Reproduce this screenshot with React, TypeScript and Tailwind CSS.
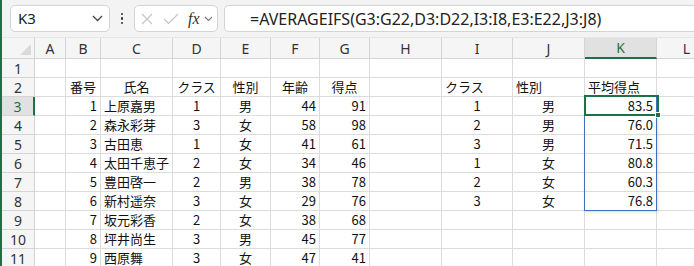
import React from "react";

const COLS = [
  { k: "A", w: 31 },
  { k: "B", w: 35 },
  { k: "C", w: 72 },
  { k: "D", w: 48 },
  { k: "E", w: 50 },
  { k: "F", w: 49 },
  { k: "G", w: 50 },
  { k: "H", w: 72 },
  { k: "I", w: 71 },
  { k: "J", w: 72 },
  { k: "K", w: 72 },
  { k: "L", w: 60 },
];

type Cell = { t: string; a: "l" | "c" | "r" };
const L = (t: string): Cell => ({ t, a: "l" });
const C = (t: string): Cell => ({ t, a: "c" });
const R = (t: string): Cell => ({ t, a: "r" });

const people: [string, string, string, string, string, string][] = [
  ["1", "上原嘉男", "1", "男", "44", "91"],
  ["2", "森永彩芽", "3", "女", "58", "98"],
  ["3", "古田恵", "1", "女", "41", "61"],
  ["4", "太田千恵子", "2", "女", "34", "46"],
  ["5", "豊田啓一", "2", "男", "38", "78"],
  ["6", "新村遥奈", "3", "女", "29", "76"],
  ["7", "坂元彩香", "2", "女", "38", "68"],
  ["8", "坪井尚生", "3", "男", "45", "77"],
  ["9", "西原舞", "3", "女", "47", "41"],
];

const summary: [string, string, string][] = [
  ["1", "男", "83.5"],
  ["2", "男", "76.0"],
  ["3", "男", "71.5"],
  ["1", "女", "80.8"],
  ["2", "女", "60.3"],
  ["3", "女", "76.8"],
];

function buildRows(): Record<string, Cell>[] {
  const rows: Record<string, Cell>[] = [];
  rows.push({});
  rows.push({
    B: C("番号"),
    C: C("氏名"),
    D: C("クラス"),
    E: C("性別"),
    F: C("年齢"),
    G: C("得点"),
    I: L("クラス"),
    J: L("性別"),
    K: L("平均得点"),
  });
  people.forEach((p, i) => {
    const r: Record<string, Cell> = {
      B: R(p[0]),
      C: L(p[1]),
      D: C(p[2]),
      E: C(p[3]),
      F: R(p[4]),
      G: R(p[5]),
    };
    if (summary[i]) {
      r.I = C(summary[i][0]);
      r.J = C(summary[i][1]);
      r.K = R(summary[i][2]);
    }
    rows.push(r);
  });
  return rows;
}

const cellFont = { fontFamily: '"Noto Sans CJK JP", "Noto Sans", sans-serif' };
const uiFont = { fontFamily: '"Noto Sans", "Open Sans", sans-serif' };

export default function App() {
  const rows = buildRows();
  return (
    <div className="relative w-[694px] h-[266px] overflow-hidden bg-white flex">
      <div className="w-[2px] shrink-0 bg-[#1e7145]" />
      <div className="flex-1 flex flex-col min-w-0">
        {/* toolbar */}
        <div className="h-[38px] shrink-0 bg-[#f3f3f3] flex items-center border-b border-[#e6e6e6]" style={uiFont}>
          <div className="ml-[8px] shrink-0 w-[100px] h-[27px] bg-white border border-[#d4d4d4] rounded-[5px] flex items-center justify-between pl-[7px] pr-[6px]">
            <span className="text-[15px] text-[#222] leading-none">K3</span>
            <svg width="11" height="7" viewBox="0 0 11 7">
              <path d="M1 1 L5.5 5.5 L10 1" fill="none" stroke="#444" strokeWidth="1.3" />
            </svg>
          </div>
          <div className="w-[24px] shrink-0 flex flex-col items-center gap-[2px]">
            <span className="w-[2.5px] h-[2.5px] bg-[#333] rounded-full" />
            <span className="w-[2.5px] h-[2.5px] bg-[#333] rounded-full" />
            <span className="w-[2.5px] h-[2.5px] bg-[#333] rounded-full" />
          </div>
          <div className="w-[84px] shrink-0 h-[27px] bg-white border border-[#d4d4d4] rounded-[5px] flex items-center pl-[6px]">
            <svg width="12" height="12" viewBox="0 0 12 12">
              <path d="M1 1 L11 11 M11 1 L1 11" stroke="#c4c4c4" strokeWidth="1.2" />
            </svg>
            <svg width="16" height="12" viewBox="0 0 16 12" className="ml-[10px]">
              <path d="M1 6 L5.5 10.5 L15 1" fill="none" stroke="#c4c4c4" strokeWidth="1.2" />
            </svg>
            <span
              className="ml-[9px] text-[16px] italic leading-none text-[#333]"
              style={{ fontFamily: '"Liberation Serif", "DejaVu Serif", serif' }}
            >
              fx
            </span>
            <svg width="9" height="6" viewBox="0 0 9 6" className="ml-[4px]">
              <path d="M1 1 L4.5 4.5 L8 1" fill="none" stroke="#777" strokeWidth="1.1" />
            </svg>
          </div>
          <div className="ml-[6px] flex-1 min-w-0 h-[27px] bg-white border border-[#d4d4d4] rounded-l-[5px] border-r-0 flex items-center pl-[25px] overflow-hidden">
            <span className="text-[16px] text-[#222] leading-none whitespace-nowrap">
              =AVERAGEIFS(G3:G22,D3:D22,I3:I8,E3:E22,J3:J8)
            </span>
          </div>
        </div>

        {/* grid */}
        <div className="flex-1 relative">
          {/* column headers */}
          <div className="flex h-[21px] bg-[#f5f5f5]" style={uiFont}>
            <div className="w-[33px] shrink-0 border-r border-b border-[#d4d4d4] flex items-end justify-end p-[3px]">
              <svg width="11" height="11" viewBox="0 0 11 11">
                <path d="M11 0 L11 11 L0 11 Z" fill="#dadada" />
              </svg>
            </div>
            {COLS.map((c) => (
              <div
                key={c.k}
                style={{ width: c.w }}
                className={
                  "shrink-0 border-r flex items-center justify-center text-[14px] " +
                  (c.k === "K"
                    ? "bg-[#e1e1e1] text-[#1e7145] border-[#d4d4d4] border-b-2 border-b-[#1e7145]"
                    : "text-[#333] border-[#d4d4d4] border-b")
                }
              >
                {c.k}
              </div>
            ))}
          </div>
          {rows.map((r, i) => (
            <div key={i} className="flex h-[19px]">
              <div
                className={
                  "w-[33px] shrink-0 border-b border-[#d4d4d4] flex items-center justify-center text-[14px] " +
                  (i === 2
                    ? "bg-[#e1e1e1] text-[#1e7145] border-r-2 border-r-[#1e7145]"
                    : "bg-[#f5f5f5] text-[#333] border-r")
                }
                style={uiFont}
              >
                {i + 1}
              </div>
              {COLS.map((c) => {
                const cell = r[c.k];
                return (
                  <div
                    key={c.k}
                    style={{ width: c.w, ...cellFont }}
                    className={
                      "shrink-0 border-r border-b border-[#dcdcdc] flex items-center px-[3px] text-[13px] text-[#111] whitespace-nowrap overflow-visible " +
                      (cell?.a === "r" ? "justify-end" : cell?.a === "c" ? "justify-center" : "justify-start")
                    }
                  >
                    {cell?.t ?? ""}
                  </div>
                );
              })}
            </div>
          ))}
          {/* range highlight K3:K8 */}
          <div
            className="absolute border border-[#3f6fc4] shadow-[1px_1px_3px_rgba(0,0,0,0.15)] pointer-events-none"
            style={{ left: 582, top: 58, width: 73, height: 115 }}
          />
          {/* active cell K3 */}
          <div
            className="absolute border-2 border-[#1e7145] pointer-events-none"
            style={{ left: 582, top: 57, width: 75, height: 21 }}
          />
          <div
            className="absolute bg-[#1e7145] border border-white pointer-events-none"
            style={{ left: 653, top: 74, width: 6, height: 6 }}
          />
        </div>
      </div>
    </div>
  );
}
